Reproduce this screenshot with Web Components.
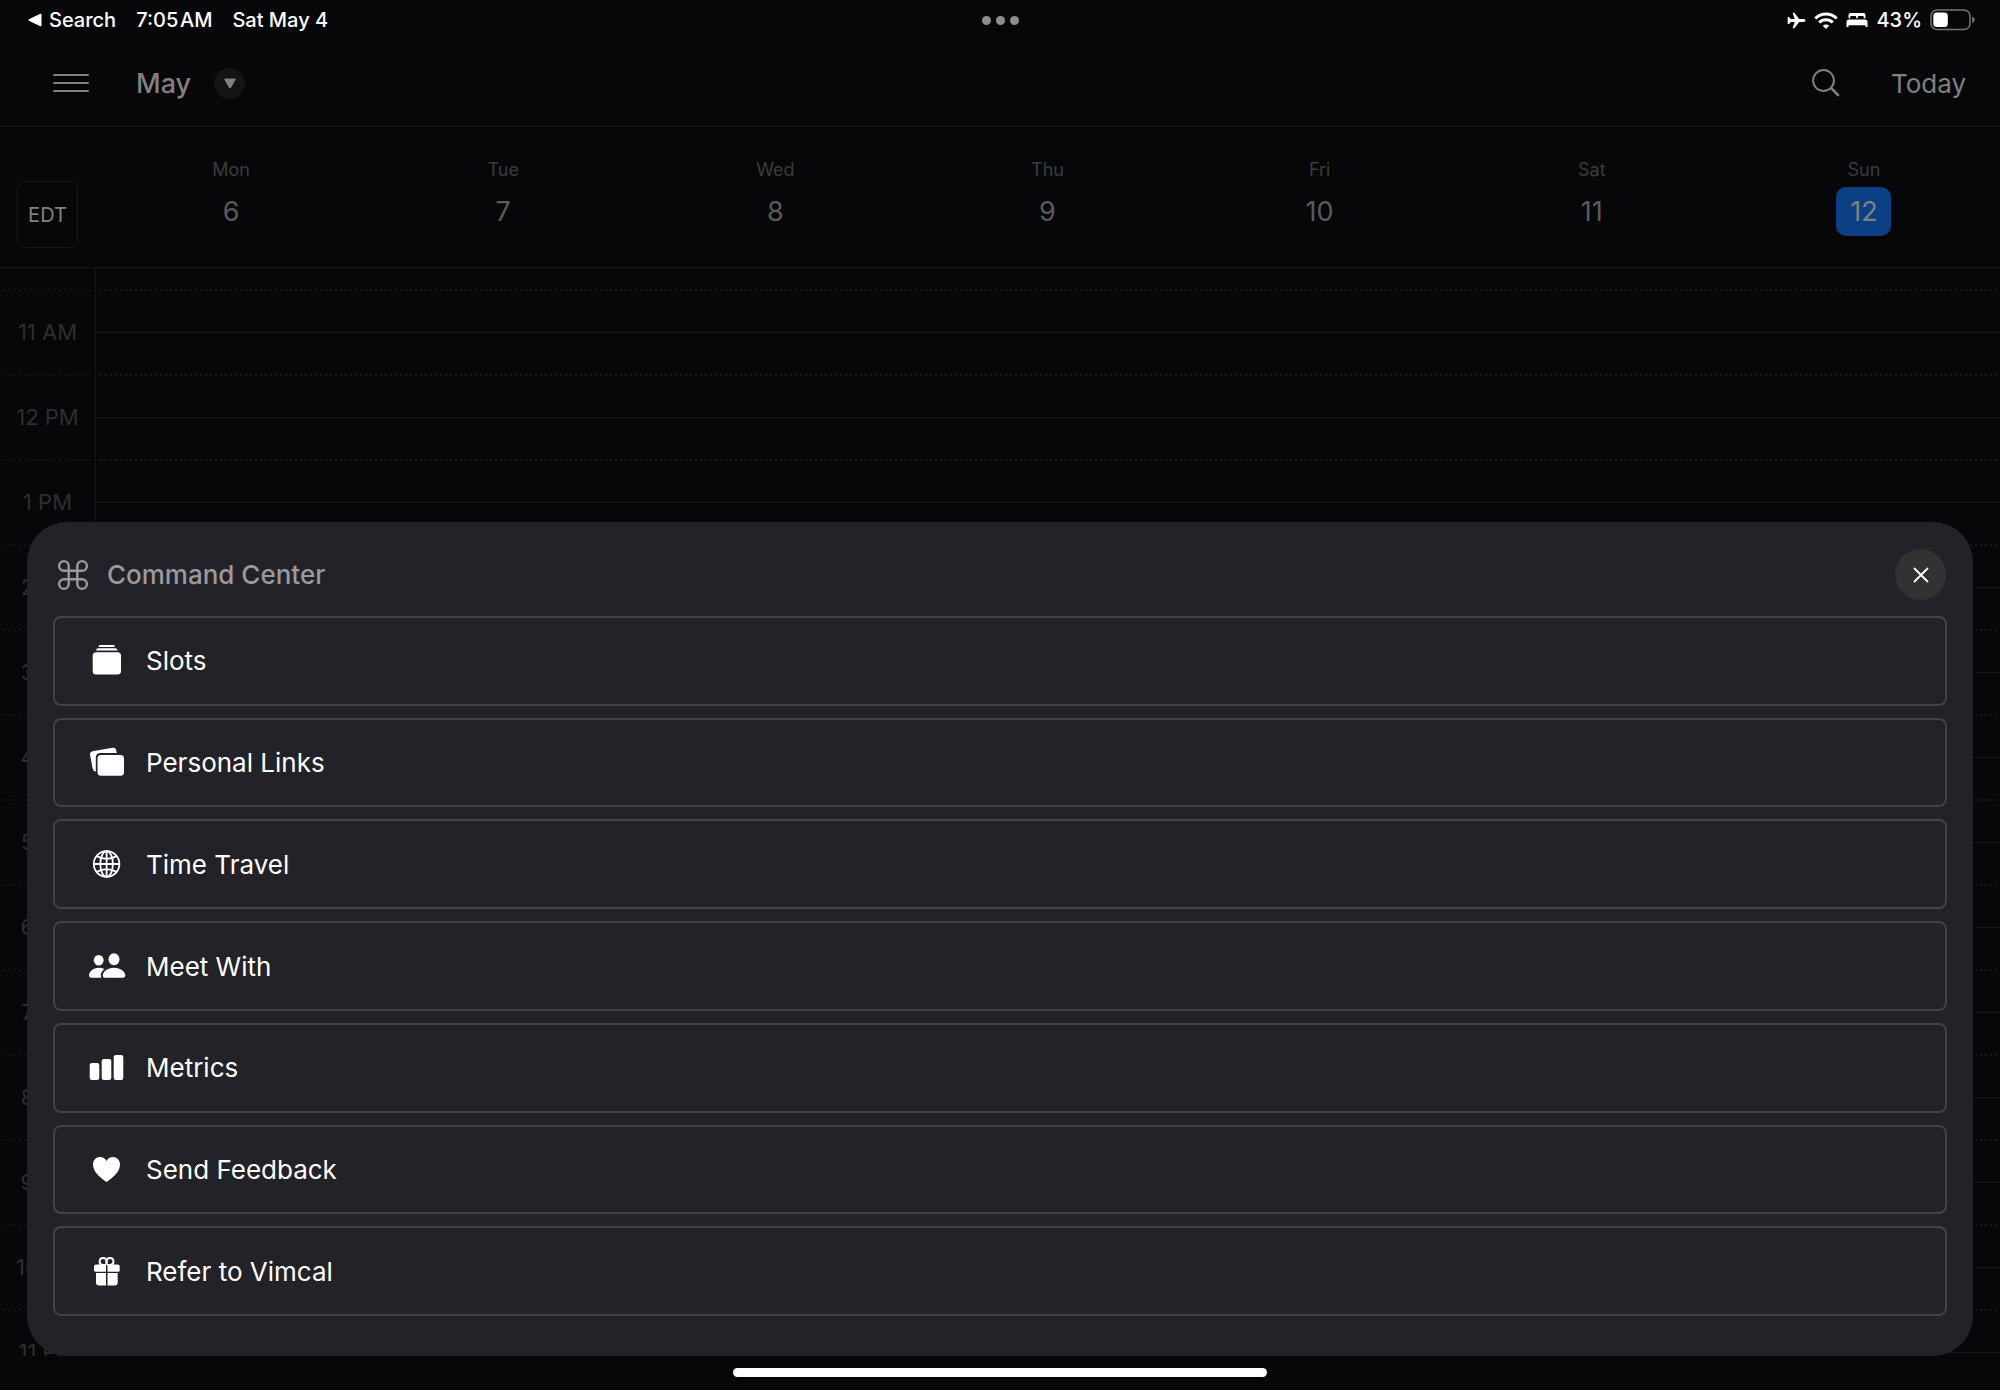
<!DOCTYPE html>
<html lang="en">
<head>
<meta charset="utf-8">
<title>Calendar</title>
<style>
    :root {
        --bg: #070709;
        --line: #161618;
        --dim: #808080;
        --sheet: #232228;
        --sheet-line: #424247;
    }
    body {
        margin: 0;
        background: var(--bg);
        font-family: Inter, "Liberation Sans", sans-serif;
    }
</style>
</head>
<body>
<calendar-app></calendar-app>

<script>
const ICONS = {
    plane: ['0 0 19 17', '<path fill="currentColor" d="M18.500 8.500c0 .9-1 1.400-2.200 1.400h-4.100L7.600 15.900c-.2.300-.4.400-.8.400H5.600l2.100-6.400H3.800L2 12.100H.7V4.900H2l1.800 2.200h3.900L5.600.7h1.200c.4 0 .6.100.8.400l4.600 6h4.100c1.200 0 2.200.5 2.200 1.400z"/>'],
    wifi: ['0 0 24 17', '<g fill="none" stroke="currentColor" stroke-width="3"><path d="M1.300 6.500a15.200 15.200 0 0 1 21.400 0"/><path d="M5.300 10.500a9.500 9.500 0 0 1 13.400 0"/></g><path fill="currentColor" d="M12 17l-3.200-3.300a4.600 4.600 0 0 1 6.400 0z"/>'],
    bed: ['0 0 22 16', '<path fill="currentColor" d="M2.500 6.300V3.200Q2.500 1 4.700 1h12.600q2.200 0 2.200 2.200v3.100h-1.700V5.100q0-1-1-1h-4q-1 0-1 1v1.200h-1.600V5.100q0-1-1-1h-4q-1 0-1 1v1.200zM.5 10q0-2.500 2.500-2.500h16q2.500 0 2.500 2.500v5h-2v-1.800h-17V15h-2z"/>'],
    battery: ['0 0 46 22', '<rect x="1" y="1" width="39" height="19.500" rx="6" fill="none" stroke="#767676" stroke-width="1.500"/><rect x="3.300" y="3.500" width="14.500" height="14.500" rx="3.500" fill="currentColor"/><path fill="#767676" d="M42.200 7.500q2.500 1 2.500 3.300t-2.500 3.300z"/>'],
    back: ['0 0 14 14', '<path fill="currentColor" d="M.8 6.200Q0 7 .8 7.700l11.500 5.500q1.200.4 1.200-.8V1.500q0-1.200-1.200-.7z"/>'],
    menu: ['0 0 38 20', '<path d="M2 2h34M2 10h34M2 18h34" stroke="currentColor" stroke-width="2" stroke-linecap="round"/>'],
    down: ['0 0 12 11', '<path fill="currentColor" d="M1.200.5h9.600q1.200 0 .7 1.200L7 9.800Q6 11.200 5 9.800L.5 1.700Q0 .5 1.200.5z"/>'],
    search: ['0 0 28 28', '<circle cx="11.500" cy="11.500" r="10.400" fill="none" stroke="currentColor" stroke-width="2"/><path d="M19.200 19.200l6.800 6.800" stroke="currentColor" stroke-width="2.600" stroke-linecap="round"/>'],
    command: ['0 0 30 30', '<path fill="none" stroke="currentColor" stroke-width="2.400" d="M10.700 10.700H5.900a4.800 4.800 0 1 1 4.800-4.800V24.100a4.800 4.800 0 1 1-4.800-4.800H24.100a4.800 4.800 0 1 1-4.800 4.800V5.900a4.800 4.800 0 1 1 4.800 4.800z"/>'],
    close: ['0 0 16 16', '<path d="M1.500 1.500l13 13M14.500 1.500l-13 13" stroke="currentColor" stroke-width="1.800" stroke-linecap="round"/>'],
    slots: ['0 0 36 36', '<g fill="currentColor"><path d="M12 2h13.500q1 0 1.500 2H10.300q.5-2 1.700-2z"/><path d="M10 5.200h17.500q1.500 0 2.200 2.400H8q.5-2.400 2-2.400z"/><rect x="4.700" y="9.300" width="28.300" height="22.300" rx="3.500"/></g>'],
    links: ['0 0 36 36', '<g fill="currentColor"><path d="M4.500 6.300l20-3.500q3-.5 3.700 2.300l.6 3H12.500q-4.700 0-4.700 4.700v13.900q-2.600-.3-3.200-3.200L2 9.600q-.3-2.800 2.500-3.300z"/><rect x="9.500" y="10" width="26.500" height="20.700" rx="3.500"/></g>'],
    globe: ['0 0 36 36', '<g fill="none" stroke="currentColor" stroke-width="1.800"><circle cx="18.600" cy="18" r="12.800"/><ellipse cx="18.600" cy="18" rx="6.300" ry="12.800"/><path d="M18.600 5.200v25.600M5.800 18h25.600M8.700 10.100q9.900 5.600 19.800 0M8.700 25.900q9.900-5.600 19.800 0"/></g>'],
    people: ['0 0 36 36', '<g fill="currentColor"><ellipse cx="10.700" cy="12.200" rx="4.900" ry="5.300"/><ellipse cx="26" cy="11.300" rx="5.500" ry="6"/><path d="M26 19.700c6.600 0 11.300 4 11.300 7.700q0 2.300-2.300 2.300H17q-2.300 0-2.300-2.300c0-3.700 4.700-7.700 11.300-7.700z"/><path d="M10.700 19.700q3 0 5.600 1.300c-2.300 1.700-3.500 4-3.500 6.300q0 1.400.6 2.400H3Q1 29.700 1 27.600c0-4 4.200-7.900 9.700-7.900z"/></g>'],
    bars: ['0 0 36 36', '<g fill="currentColor"><rect x="1.700" y="13" width="9.600" height="17" rx="2.200"/><rect x="13.700" y="9" width="9.600" height="21" rx="2.200"/><rect x="25.700" y="5" width="9.600" height="25" rx="2.200"/></g>'],
    heart: ['0 0 36 36', '<path fill="currentColor" d="M18.500 31C13 27.500 5 21.200 5 13.600 5 9.200 8 6 12 6c2.800 0 5.200 1.500 6.500 4C19.800 7.500 22.200 6 25 6c4 0 7 3.200 7 7.600C32 21.200 24 27.500 18.500 31z"/>'],
    gift: ['0 0 36 36', '<g fill="none" stroke="currentColor" stroke-width="1.900"><path d="M18 12h-3.500a3.500 3.500 0 1 1 4.100-3.700V12"/><path d="M19 12h3.500a3.500 3.500 0 1 0-4-3.700V12"/></g><g fill="currentColor"><path d="M8 11.500h10v7.200H7.500Q6 18.700 6 17.200v-3.700q0-2 2-2z"/><path d="M19.500 11.500h10.200q2 0 2 2v3.700q0 1.500-1.500 1.500H19.500z"/><path d="M8 20h10v12.500h-7q-3 0-3-3z"/><path d="M19.500 20h10.200v9.500q0 3-3 3h-7.200z"/></g>']
};

class VcIcon extends HTMLElement {
    connectedCallback() {
        const [box, shape] = ICONS[this.getAttribute('name')];
        const [, , w, h] = box.split(' ');
        this.attachShadow({ mode: 'open' }).innerHTML = `
            <style>
                :host { display: block; flex: none; }
                svg { display: block; overflow: visible; }
            </style>
            <svg viewBox="${box}" width="${w}" height="${h}" aria-hidden="true">${shape}</svg>
        `;
    }
}
customElements.define('vc-icon', VcIcon);

class StatusBar extends HTMLElement {
    connectedCallback() {
        this.attachShadow({ mode: 'open' }).innerHTML = `
            <style>
                :host {
                    display: grid;
                    grid-template-columns: 1fr auto 1fr;
                    align-items: center;
                    height: 40px;
                    padding: 0 24px;
                    color: #fff;
                    font-size: 20px;
                    font-weight: 500;
                }
                .left, .right, .dots { display: flex; align-items: center; }
                .left { gap: 20px; padding-left: 4px; }
                .right { gap: 8px; justify-content: flex-end; }
                .dots { gap: 5px; }
                .dots i { width: 9px; height: 9px; border-radius: 50%; background: #8e8e90; }
                a { display: flex; align-items: center; gap: 7px; color: inherit; text-decoration: none; }
            </style>
            <div class="left">
                <a href="#search"><vc-icon name="back"></vc-icon>Search</a>
                <span>7:05&#8202;AM</span>
                <span>Sat May 4</span>
            </div>
            <div class="dots"><i></i><i></i><i></i></div>
            <div class="right">
                <vc-icon name="plane"></vc-icon>
                <vc-icon name="wifi"></vc-icon>
                <vc-icon name="bed"></vc-icon>
                <span>43%</span>
                <vc-icon name="battery"></vc-icon>
            </div>
        `;
    }
}
customElements.define('status-bar', StatusBar);

class TopBar extends HTMLElement {
    connectedCallback() {
        this.attachShadow({ mode: 'open' }).innerHTML = `
            <style>
                :host {
                    display: flex;
                    align-items: center;
                    height: 86px;
                    padding: 0 34px 0 52px;
                    border-bottom: 1px solid var(--line);
                    color: var(--dim);
                    font-size: 26px;
                }
                button {
                    display: flex;
                    align-items: center;
                    justify-content: center;
                    padding: 0;
                    border: 0;
                    background: none;
                    color: inherit;
                    font: inherit;
                    cursor: pointer;
                }
                h1 { margin: 0 23px 0 46px; font-size: 27px; font-weight: 500; }
                .month { width: 31px; height: 31px; border-radius: 50%; background: #141414; }
                .search { margin: 0 51px 0 auto; }
            </style>
            <button aria-label="Menu"><vc-icon name="menu"></vc-icon></button>
            <h1>May</h1>
            <button class="month" aria-label="Choose month"><vc-icon name="down"></vc-icon></button>
            <button class="search" aria-label="Search"><vc-icon name="search"></vc-icon></button>
            <button>Today</button>
        `;
    }
}
customElements.define('top-bar', TopBar);

class WeekHeader extends HTMLElement {
    connectedCallback() {
        const days = ['Mon', 'Tue', 'Wed', 'Thu', 'Fri', 'Sat', 'Sun'];
        this.attachShadow({ mode: 'open' }).innerHTML = `
            <style>
                :host {
                    display: grid;
                    grid-template-columns: 95px repeat(7, 1fr);
                    height: 140px;
                    border-bottom: 1px solid var(--line);
                }
                .zone {
                    width: 61px;
                    height: 67px;
                    margin: 54px 0 0 17px;
                    padding: 0;
                    border: 1px solid var(--line);
                    border-radius: 8px;
                    background: none;
                    color: var(--dim);
                    font: inherit;
                    font-size: 20px;
                }
                .day {
                    display: flex;
                    flex-direction: column;
                    align-items: center;
                    gap: 5px;
                    padding-top: 31px;
                    color: #3c3c3d;
                    font-size: 18px;
                    line-height: 24px;
                }
                .day b {
                    width: 55px;
                    border-radius: 10px;
                    color: #5b5b5c;
                    font-size: 27px;
                    font-weight: 400;
                    line-height: 49px;
                    text-align: center;
                }
                .day.picked b { background: #0b4084; color: var(--dim); }
            </style>
            <button class="zone">EDT</button>
            ${days.map((day, i) => `
                <div class="day ${day === 'Sun' ? 'picked' : ''}"><span>${day}</span><b>${i + 6}</b></div>
            `).join('')}
        `;
    }
}
customElements.define('week-header', WeekHeader);

class HourGrid extends HTMLElement {
    connectedCallback() {
        const hours = ['11 AM', '12 PM'];
        for (let h = 1; h <= 11; h++) hours.push(h + ' PM');

        this.attachShadow({ mode: 'open' }).innerHTML = `
            <style>
                :host { display: block; overflow: hidden; }
                .row { display: grid; grid-template-columns: 95px 1fr; height: 85px; }
                .row:first-of-type { height: 21px; }
                .label {
                    display: flex;
                    align-items: center;
                    justify-content: center;
                    color: #2e2e2f;
                    font-size: 22px;
                }
                .slot { border-left: 1px solid var(--line); }
                /* half-hour marks are dotted, full hours solid */
                .label {
                    background: repeating-linear-gradient(90deg, #131315 0 2px, transparent 2px 5px) 4px 0 / 88px 2px no-repeat;
                }
                .slot {
                    background:
                        linear-gradient(var(--line), var(--line)) 0 43px / 100% 1px no-repeat,
                        repeating-linear-gradient(90deg, #19191b 0 2px, transparent 2px 5px) 4px 0 / 100% 2px no-repeat;
                }
                .row:first-of-type > * { background: none; }
            </style>
            <div class="row"><div></div><div class="slot"></div></div>
            ${hours.map(hour => `
                <div class="row"><div class="label">${hour}</div><div class="slot"></div></div>
            `).join('')}
        `;
    }
}
customElements.define('hour-grid', HourGrid);

class CommandItem extends HTMLElement {
    connectedCallback() {
        this.attachShadow({ mode: 'open' }).innerHTML = `
            <style>
                :host { display: flex; flex: 1; }
                button {
                    display: flex;
                    flex: 1;
                    align-items: center;
                    gap: 22px;
                    padding: 0 33px;
                    border: 2px solid var(--sheet-line);
                    border-radius: 8px;
                    background: none;
                    color: #fff;
                    font: inherit;
                    font-size: 26px;
                    cursor: pointer;
                }
            </style>
            <button><vc-icon name="${this.getAttribute('icon')}"></vc-icon><slot></slot></button>
        `;
    }
}
customElements.define('command-item', CommandItem);

class CommandSheet extends HTMLElement {
    connectedCallback() {
        this.attachShadow({ mode: 'open' }).innerHTML = `
            <style>
                :host {
                    display: flex;
                    flex-direction: column;
                    gap: 16px;
                    box-sizing: border-box;
                    min-height: 60vh;
                    padding: 27px 26px 40px;
                    border-radius: 40px;
                    background: var(--sheet);
                }
                header { display: flex; align-items: center; padding-right: 1px; color: #9a9a9f; }
                vc-icon { margin-left: 5px; }
                h2 { flex: 1; margin: 0 0 0 19px; font-size: 26px; font-weight: 500; }
                header button {
                    display: grid;
                    place-items: center;
                    width: 51px;
                    height: 51px;
                    padding: 0;
                    border: 0;
                    border-radius: 50%;
                    background: #323233;
                    color: #fff;
                    cursor: pointer;
                }
                button vc-icon { margin: 0; }
                .list { display: flex; flex: 1; flex-direction: column; gap: 12px; }
            </style>
            <header>
                <vc-icon name="command"></vc-icon>
                <h2>Command Center</h2>
                <button id="close" aria-label="Close"><vc-icon name="close"></vc-icon></button>
            </header>
            <div class="list"><slot></slot></div>
        `;

        this.shadowRoot.querySelector('#close').addEventListener('click', () => {
            this.remove();
        });
    }
}
customElements.define('command-sheet', CommandSheet);

class CalendarApp extends HTMLElement {
    connectedCallback() {
        this.attachShadow({ mode: 'open' }).innerHTML = `
            <style>
                :host { display: flex; flex-direction: column; height: 100vh; position: relative; }
                hour-grid { flex: 1; min-height: 0; }
                /* the sheet floats over the calendar, just above the home bar */
                command-sheet { position: absolute; left: 27px; right: 27px; bottom: 34px; }
                .home { display: flex; justify-content: center; height: 34px; }
                .home i { width: 534px; height: 9px; margin-top: 12px; border-radius: 5px; background: #fff; }
            </style>
            <status-bar></status-bar>
            <top-bar></top-bar>
            <week-header></week-header>
            <hour-grid></hour-grid>
            <div class="home"><i></i></div>
            <command-sheet>
                <command-item icon="slots">Slots</command-item>
                <command-item icon="links">Personal Links</command-item>
                <command-item icon="globe">Time Travel</command-item>
                <command-item icon="people">Meet With</command-item>
                <command-item icon="bars">Metrics</command-item>
                <command-item icon="heart">Send Feedback</command-item>
                <command-item icon="gift">Refer to Vimcal</command-item>
            </command-sheet>
        `;
    }
}
customElements.define('calendar-app', CalendarApp);
</script>
</body>
</html>
